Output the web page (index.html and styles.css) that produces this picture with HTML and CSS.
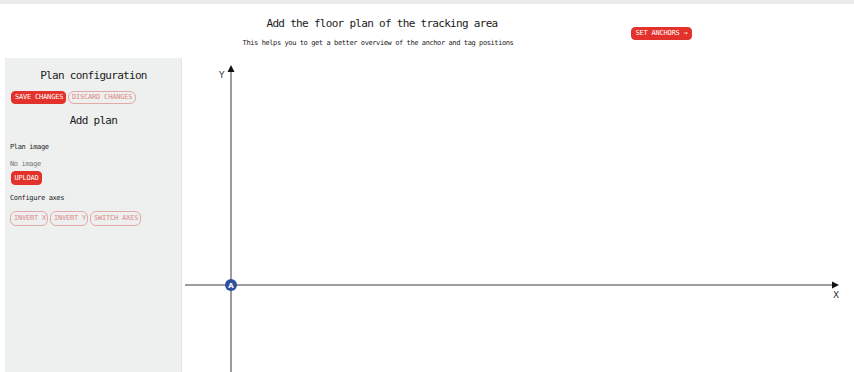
FILE: index.html
```html
<!DOCTYPE html>
<html lang="en">
<head>
<meta charset="utf-8">
<title>Floor plan</title>
<link rel="stylesheet" href="styles.css">
</head>
<body>
<div class="topbar"></div>
<header class="header">
  <div class="heading">
    <h1 class="title">Add the floor plan of the tracking area</h1>
    <p class="subtitle">This helps you to get a better overview of the anchor and tag positions</p>
  </div>
  <button class="btn btn-solid btn-anchors">SET ANCHORS &rarr;</button>
</header>
<main class="main">
  <aside class="sidebar">
    <h2 class="side-title">Plan configuration</h2>
    <div class="btn-row row-save">
      <button class="btn btn-solid">SAVE CHANGES</button>
      <button class="btn btn-outline">DISCARD CHANGES</button>
    </div>
    <h2 class="side-title sub-title">Add plan</h2>
    <p class="label label-image">Plan image</p>
    <p class="muted">No image</p>
    <button class="btn btn-solid btn-upload">UPLOAD</button>
    <p class="label label-axes">Configure axes</p>
    <div class="btn-row row-axes">
      <button class="btn btn-outline btn-axis">INVERT X</button>
      <button class="btn btn-outline btn-axis">INVERT Y</button>
      <button class="btn btn-outline btn-axis">SWITCH AXES</button>
    </div>
  </aside>
  <section class="canvas">
    <svg class="chart" width="672" height="314" viewBox="0 0 672 314">
      <line x1="3" y1="227" x2="652" y2="227" stroke="#3a3a3a" stroke-width="1"/>
      <polygon points="650,223.5 657,227 650,230.5" fill="#111"/>
      <line x1="49" y1="12" x2="49" y2="314" stroke="#3a3a3a" stroke-width="1"/>
      <polygon points="45.5,14 49,7 52.5,14" fill="#111"/>
      <text x="37" y="20" class="axis-label">Y</text>
      <text x="651" y="240" class="axis-label">X</text>
      <circle cx="49" cy="227" r="6" fill="#2f4f9f"/>
      <text x="49" y="229.8" text-anchor="middle" class="anchor-label">A</text>
    </svg>
  </section>
</main>
</body>
</html>
```

FILE: styles.css
```css
* { box-sizing: border-box; }

html, body {
  margin: 0;
  padding: 0;
  background: #ffffff;
  font-family: "DejaVu Sans Mono", "Liberation Mono", monospace;
  color: #1d1d1d;
  overflow: hidden;
}

.topbar {
  height: 4px;
  background: #ebebeb;
}

.header {
  display: flex;
  align-items: flex-start;
  height: 54px;
}

.heading {
  width: 300px;
  margin-left: 232px;
  padding-top: 13px;
  text-align: center;
}

.title {
  margin: 0;
  font-size: 11px;
  line-height: 14px;
  font-weight: normal;
  letter-spacing: -0.7px;
  color: #1a1a1a;
}

.subtitle {
  margin: 7px 0 0;
  padding-right: 8px;
  font-size: 7px;
  line-height: 10px;
  letter-spacing: -0.4px;
  color: #222;
  white-space: nowrap;
}

.btn {
  font-family: "DejaVu Sans Mono", "Liberation Mono", monospace;
  font-size: 7px;
  letter-spacing: -0.2px;
  line-height: 1;
  padding: 0 3px;
  cursor: pointer;
  white-space: nowrap;
}

.btn-solid {
  background: #e2322b;
  color: #ffffff;
  border: 1px solid #e2322b;
  border-radius: 4px;
}

.btn-outline {
  background: transparent;
  color: #dc8a88;
  border: 1px solid #e3a9a7;
  border-radius: 6px;
}

.btn-anchors {
  margin-left: 99px;
  margin-top: 23px;
  width: 61px;
  height: 13px;
  border-radius: 4px;
}

.main {
  display: flex;
  height: 314px;
}

.sidebar {
  width: 177px;
  margin-left: 5px;
  padding: 11px 4px 0 5px;
  background: #eef0ef;
  border-right: 1px solid #e3e5e4;
}

.side-title {
  margin: 0;
  font-size: 11px;
  line-height: 14px;
  font-weight: normal;
  letter-spacing: -0.7px;
  text-align: center;
  color: #1a1a1a;
}

.sub-title { margin-top: 10px; }

.btn-row {
  display: flex;
  gap: 2px;
}

.row-save {
  margin-top: 8px;
  padding-left: 1px;
}

.row-save .btn { height: 13px; }
.row-save .btn-solid { width: 55px; }
.row-save .btn-outline { width: 68px; }

.label,
.muted {
  margin: 0;
  font-size: 7px;
  line-height: 10px;
  letter-spacing: -0.35px;
}

.label { color: #222; }
.label-image { margin-top: 14px; }
.label-axes { margin-top: 8px; }

.muted {
  margin-top: 7px;
  color: #777;
}

.btn-upload {
  display: block;
  margin: 2px 0 0 1px;
  width: 31px;
  height: 14px;
  padding: 0;
}

.row-axes { margin-top: 8px; }
.row-axes .btn { height: 15px; }
.row-axes .btn-axis:nth-child(1),
.row-axes .btn-axis:nth-child(2) { width: 38px; }
.row-axes .btn-axis:nth-child(3) { width: 51px; }

.canvas {
  flex: 1;
}

.chart { display: block; }

.axis-label {
  font-family: "DejaVu Sans", sans-serif;
  font-size: 9px;
  fill: #333;
}

.anchor-label {
  font-family: "DejaVu Sans", sans-serif;
  font-size: 7px;
  font-weight: bold;
  fill: #ffffff;
}
```
